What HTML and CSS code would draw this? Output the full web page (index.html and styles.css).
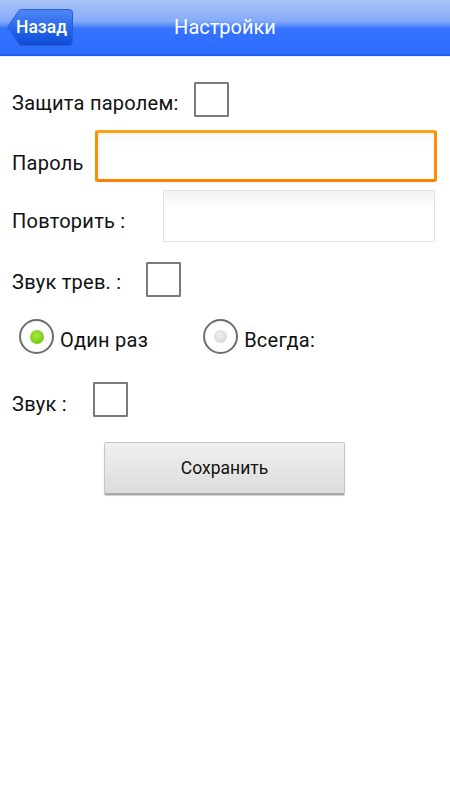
FILE: index.html
```html
<!DOCTYPE html>
<html lang="ru">
<head>
<meta charset="utf-8">
<title>Настройки</title>
<link rel="stylesheet" href="styles.css">
</head>
<body>
<header class="bar">
  <button class="back">
    <svg class="back-shape" width="66" height="37" viewBox="0 0 66 37">
      <defs>
        <linearGradient id="bg" x1="0" y1="0" x2="0" y2="1">
          <stop offset="0" stop-color="#4f88f6"/>
          <stop offset="0.5" stop-color="#2a68ec"/>
          <stop offset="1" stop-color="#0f4bd6"/>
        </linearGradient>
      </defs>
      <path d="M0.5 18 L12 1.5 Q13 0.5 14.5 0.5 L62 0.5 Q65.5 0.5 65.5 4 L65.5 33 Q65.5 36.5 62 36.5 L14.5 36.5 Q13 36.5 12 35.5 Z" fill="url(#bg)" stroke="#2a5fd0" stroke-width="1"/>
    </svg>
    <span class="back-label">Назад</span>
  </button>
  <h1 class="title">Настройки</h1>
</header>
<main class="form">
  <div class="row row-prot">
    <span class="label">Защита паролем:</span>
    <span class="check"></span>
  </div>
  <div class="row row-pass">
    <span class="label">Пароль</span>
    <span class="input input-focus"></span>
  </div>
  <div class="row row-rep">
    <span class="label">Повторить :</span>
    <span class="input input-plain"></span>
  </div>
  <div class="row row-alarm">
    <span class="label">Звук трев. :</span>
    <span class="check"></span>
  </div>
  <div class="row row-radio">
    <span class="radio radio-on"><span class="dot"></span></span>
    <span class="label radio-label">Один раз</span>
    <span class="radio radio-off"><span class="dot"></span></span>
    <span class="label radio-label">Всегда:</span>
  </div>
  <div class="row row-sound">
    <span class="label">Звук :</span>
    <span class="check"></span>
  </div>
  <div class="actions">
    <button class="save">Сохранить</button>
  </div>
</main>
</body>
</html>
```

FILE: styles.css
```css
* { box-sizing: border-box; }
html, body { margin: 0; padding: 0; background: #fff; }
body {
  width: 450px;
  height: 800px;
  font-family: Roboto, "Noto Sans", "DejaVu Sans", sans-serif;
  color: #111;
}
.bar {
  height: 56px;
  display: grid;
  grid-template-columns: 1fr;
  align-items: center;
  background: linear-gradient(#a8c4f7 0, #86abf8 38%, #5a8df9 48%, #3573ff 52%, #2c6cff 100%);
  border-bottom: 2px solid #1c5cf0;
  box-shadow: 0 1px 0 #e8eef8;
}
.back {
  grid-area: 1 / 1;
  justify-self: start;
  margin: 1px 0 0 7px;
  padding: 0;
  border: 0;
  background: none;
  display: grid;
  width: 66px;
  height: 37px;
  cursor: pointer;
}
.back-shape, .back-label { grid-area: 1 / 1; }
.back-label {
  align-self: center;
  justify-self: start;
  margin-left: 9px;
  color: #fff;
  font-family: Roboto, "Noto Sans", sans-serif;
  font-size: 17.5px;
  font-weight: 500;
  line-height: 1;
}
.title {
  grid-area: 1 / 1;
  justify-self: center;
  margin: 0;
  color: #fff;
  font-size: 20px;
  font-weight: 400;
}
.form {
  padding: 26px 0 0 12px;
}
.row {
  display: flex;
  align-items: center;
}
.label {
  font-size: 20px;
  letter-spacing: 0.25px;
  line-height: 1;
  color: #111;
}
.check {
  width: 35px;
  height: 35px;
  border: 2px solid #7a7a7a;
  border-radius: 1px;
  background: #fff;
}
.row-prot { height: 35px; }
.row-prot .label { padding-top: 7px; }
.row-prot .check { margin-left: 15px; }
.row-pass { height: 52px; margin-top: 13px; }
.row-pass .label { padding-top: 14px; }
.row-pass .input { margin-left: 11px; width: 342px; }
.row-rep { height: 52px; margin-top: 8px; }
.row-rep .label { padding-top: 10px; }
.row-rep .input { margin-left: 38px; width: 272px; }
.input { height: 52px; border-radius: 3px; }
.input-focus {
  border: 3px solid #ff8e00;
  border-top-color: #ffa114;
  border-bottom-color: #ff8000;
  background: linear-gradient(#f7f7f7, #fff 30%);
}
.input-plain {
  border: 1px solid #e2e2e2;
  border-radius: 1px;
  background: linear-gradient(#f2f2f2, #fff 35%);
}
.row-alarm { height: 35px; margin-top: 20px; }
.row-alarm .label { padding-top: 5px; }
.row-alarm .check { margin-left: 25px; }
.row-radio { height: 35px; margin-top: 22px; padding-left: 7px; }
.row-radio .label { padding-top: 6px; }
.radio {
  width: 35px;
  height: 35px;
  border-radius: 50%;
  border: 2px solid #6e6e6e;
  background: radial-gradient(circle, #fff 60%, #ececec 100%);
  display: flex;
  align-items: center;
  justify-content: center;
}
.dot {
  width: 14px;
  height: 14px;
  border-radius: 50%;
}
.radio-on .dot {
  background: radial-gradient(circle at 45% 40%, #a8ea3c 0, #7fd21b 60%, #68b812 100%);
}
.radio-off .dot {
  width: 13px;
  height: 13px;
  background: radial-gradient(circle at 45% 40%, #f0f0f0 0, #d8d8d8 70%, #c4c4c4 100%);
}
.radio-label { margin-left: 6px; }
.radio-off { margin-left: 55px; }
.row-sound { height: 35px; margin-top: 28px; }
.row-sound .label { padding-top: 9px; }
.row-sound .check { margin-left: 26px; }
.actions {
  margin-top: 25px;
  padding-left: 92px;
}
.save {
  width: 241px;
  height: 53px;
  border: 1px solid #c6c6c6;
  border-bottom: 2px solid #a8a8a8;
  border-radius: 2px;
  background: linear-gradient(#f0f0f0, #dcdcdc);
  font-family: Roboto, "Noto Sans", sans-serif;
  font-size: 17.5px;
  color: #111;
  box-shadow: 0 1px 1px rgba(0,0,0,0.2);
}
```
